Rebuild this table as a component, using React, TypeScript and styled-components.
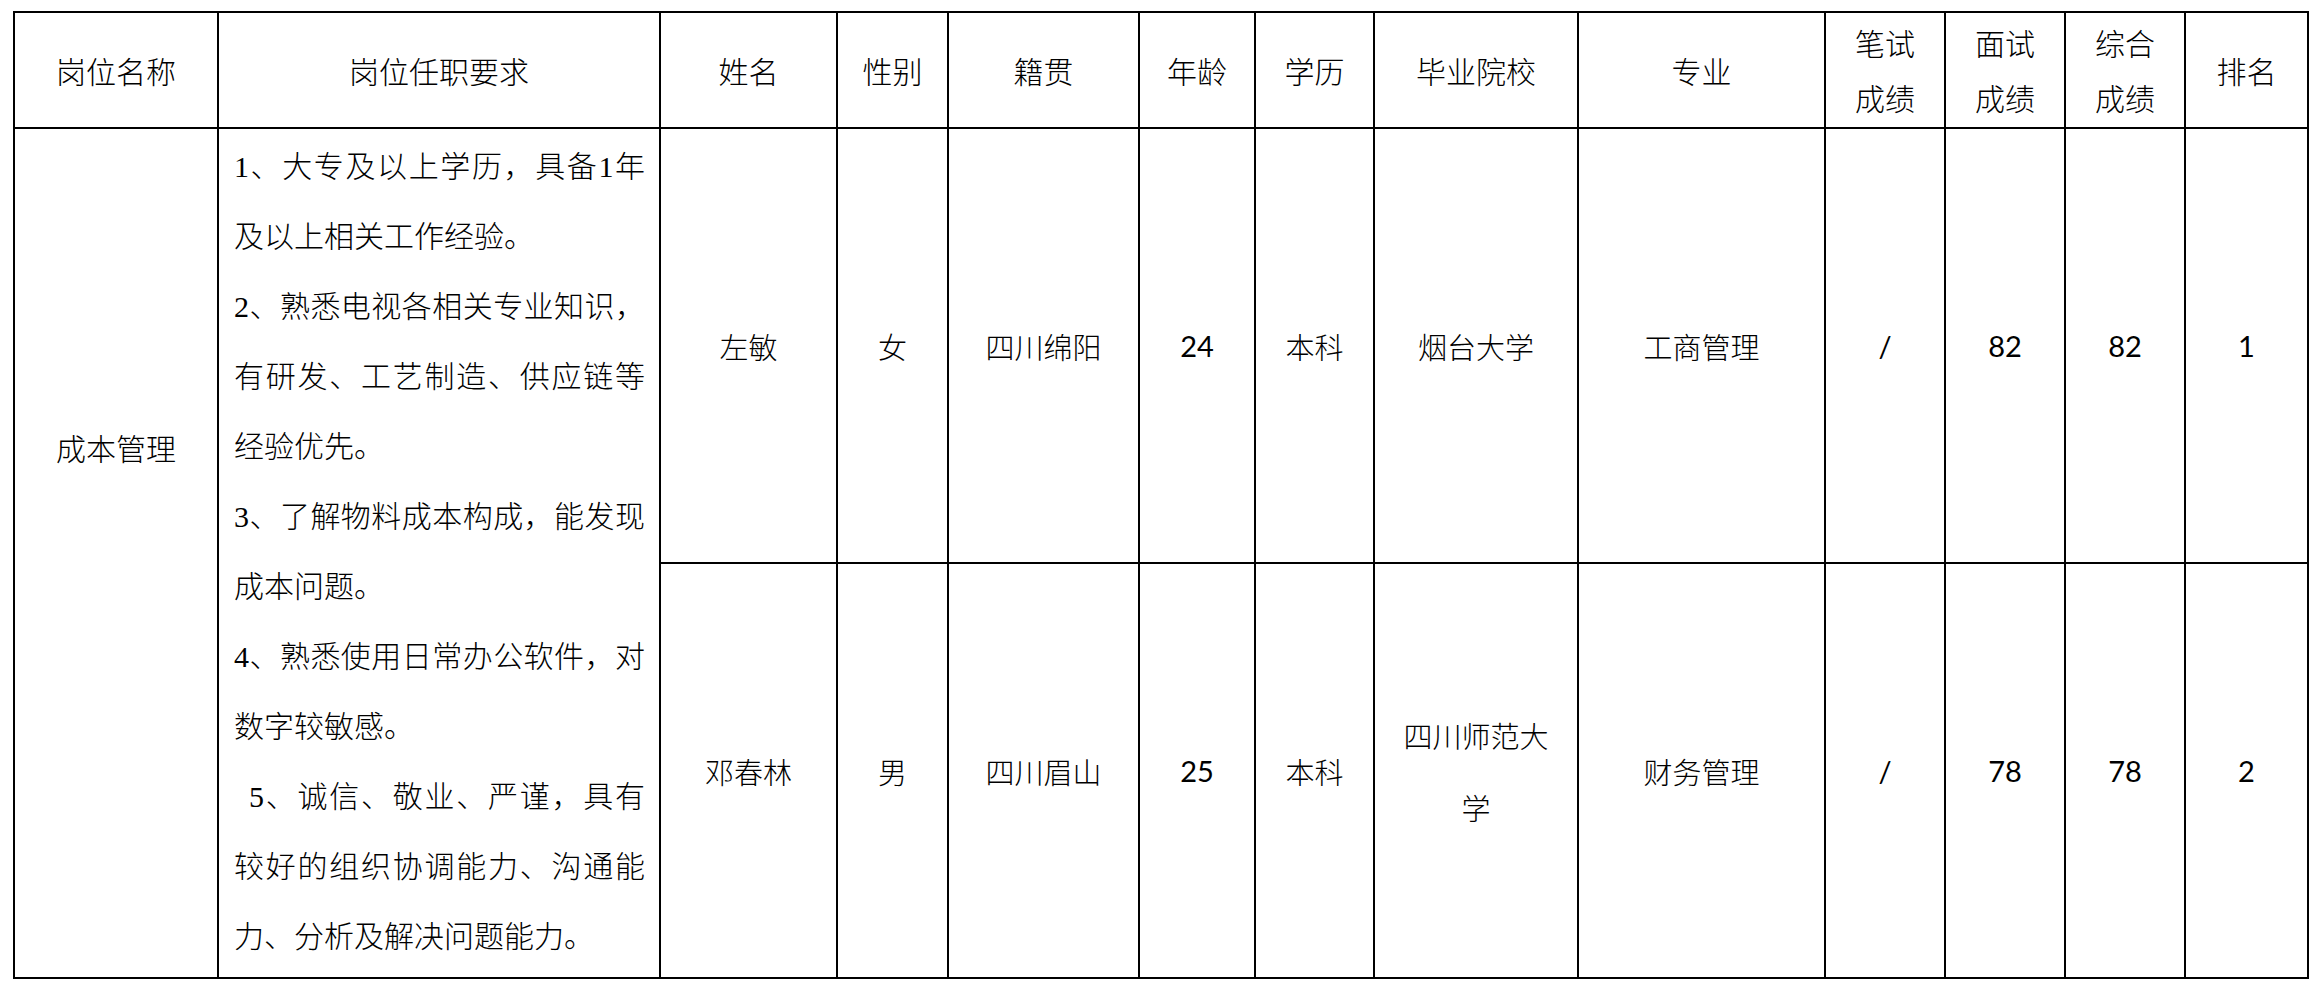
import React from 'react';
import styled, { createGlobalStyle } from 'styled-components';

const GlobalStyle = createGlobalStyle`
  html, body {
    margin: 0;
    padding: 0;
    background: #fff;
  }
  body {
    width: 2315px;
    height: 984px;
    overflow: hidden;
  }
`;

const Page = styled.div`
  padding: 11px 0 0 13px;
`;

const Table = styled.table`
  border-collapse: collapse;
  table-layout: fixed;
  width: 2296px;
  color: #000;
  font-family: 'Noto Sans CJK SC', sans-serif;
  font-weight: 300;
  text-spacing-trim: space-all;
`;

const Row = styled.tr<{ $h: number }>`
  height: ${p => p.$h}px;
`;

const HeadCell = styled.th`
  border: 2px solid #000;
  padding: 0 18px;
  font-size: 30px;
  font-weight: 300;
  line-height: 55px;
  text-align: center;
  vertical-align: middle;
`;

const Cell = styled.td<{ $num?: boolean }>`
  border: 2px solid #000;
  padding: 0 18px;
  font-family: ${p =>
    p.$num ? "'Lato', 'Noto Sans CJK SC', sans-serif" : "'Noto Sans CJK SC', sans-serif"};
  font-weight: ${p => (p.$num ? 400 : 300)};
  font-size: 29px;
  line-height: 72px;
  text-align: center;
  vertical-align: middle;
`;

const TitleCell = styled.td<{ $top: number }>`
  border: 2px solid #000;
  padding: ${p => p.$top}px 18px 0;
  font-size: 30px;
  line-height: 70px;
  text-align: center;
  vertical-align: top;
`;

const ReqCell = styled.td`
  border: 2px solid #000;
  padding: 3px 14px 0 15px;
  vertical-align: top;
  font-family: 'Liberation Serif', 'Noto Sans CJK SC', serif;
  font-size: 30px;
  line-height: 70px;
`;

const ReqPara = styled.p`
  margin: 0;
  text-align: justify;
`;

const widths = [204, 442, 177, 111, 191, 116, 119, 204, 247, 120, 120, 120, 123];

const headers = [
  '岗位名称',
  '岗位任职要求',
  '姓名',
  '性别',
  '籍贯',
  '年龄',
  '学历',
  '毕业院校',
  '专业',
  '笔试成绩',
  '面试成绩',
  '综合成绩',
  '排名',
];

const requirements = [
  '1、大专及以上学历，具备1年及以上相关工作经验。',
  '2、熟悉电视各相关专业知识，有研发、工艺制造、供应链等经验优先。',
  '3、了解物料成本构成，能发现成本问题。',
  '4、熟悉使用日常办公软件，对数字较敏感。',
  '\u20025、诚信、敬业、严谨，具有较好的组织协调能力、沟通能力、分析及解决问题能力。',
];

interface Candidate {
  name: string;
  sex: string;
  origin: string;
  age: string;
  edu: string;
  school: string;
  major: string;
  written: string;
  interview: string;
  total: string;
  rank: string;
}

const candidates: Candidate[] = [
  {
    name: '左敏',
    sex: '女',
    origin: '四川绵阳',
    age: '24',
    edu: '本科',
    school: '烟台大学',
    major: '工商管理',
    written: '/',
    interview: '82',
    total: '82',
    rank: '1',
  },
  {
    name: '邓春林',
    sex: '男',
    origin: '四川眉山',
    age: '25',
    edu: '本科',
    school: '四川师范大学',
    major: '财务管理',
    written: '/',
    interview: '78',
    total: '78',
    rank: '2',
  },
];

const rowHeights = [435, 415];

const CandidateCells: React.FC<{ c: Candidate }> = ({ c }) => (
  <>
    <Cell>{c.name}</Cell>
    <Cell>{c.sex}</Cell>
    <Cell>{c.origin}</Cell>
    <Cell $num>{c.age}</Cell>
    <Cell>{c.edu}</Cell>
    <Cell>{c.school}</Cell>
    <Cell>{c.major}</Cell>
    <Cell $num>{c.written}</Cell>
    <Cell $num>{c.interview}</Cell>
    <Cell $num>{c.total}</Cell>
    <Cell $num>{c.rank}</Cell>
  </>
);

const App: React.FC = () => (
  <>
    <GlobalStyle />
    <Page>
      <Table>
        <colgroup>
          {widths.map((w, i) => (
            <col key={i} style={{ width: w }} />
          ))}
        </colgroup>
        <thead>
          <Row $h={116}>
            {headers.map(h => (
              <HeadCell key={h}>{h}</HeadCell>
            ))}
          </Row>
        </thead>
        <tbody>
          {candidates.map((c, idx) => (
            <Row key={c.name} $h={rowHeights[idx]}>
              {idx === 0 && (
                <>
                  <TitleCell rowSpan={2} $top={283}>
                    成本管理
                  </TitleCell>
                  <ReqCell rowSpan={2}>
                    {requirements.map(r => (
                      <ReqPara key={r}>{r}</ReqPara>
                    ))}
                  </ReqCell>
                </>
              )}
              <CandidateCells c={c} />
            </Row>
          ))}
        </tbody>
      </Table>
    </Page>
  </>
);

export default App;
